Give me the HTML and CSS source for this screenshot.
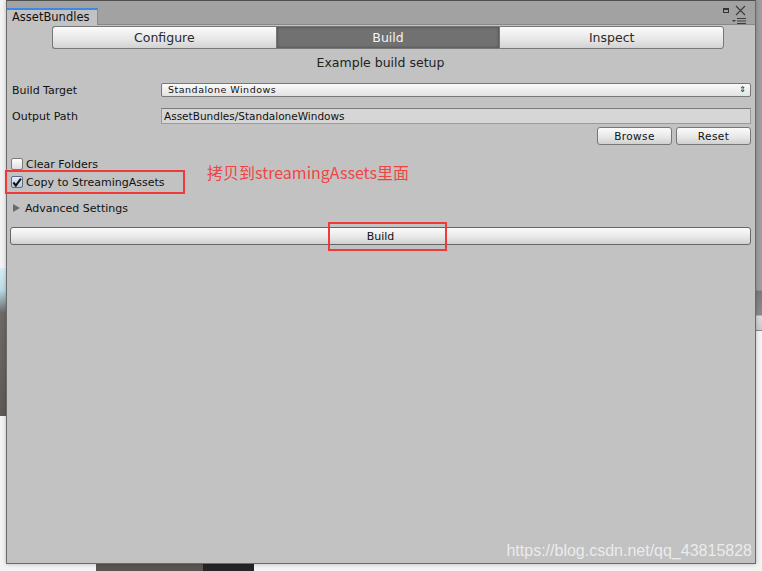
FILE: index.html
```html
<!DOCTYPE html>
<html lang="zh">
<head>
    <meta charset="UTF-8" />
    <meta name="viewport" content="width=device-width, initial-scale=1">
    <title>AssetBundles</title>
    <link rel="stylesheet" href="styles.css">
</head>
<body>
    <div class="desk">
        <div class="desk-sky"></div>
        <div class="desk-bottom"></div>
        <div class="desk-bottom dark"></div>
        <div class="desk-right"></div>

        <div class="window">
            <div class="titlebar">
                <div class="tab">AssetBundles</div>
                <div class="win-icons">
                    <div class="win-row">
                        <span class="max-box"></span>
                        <svg width="11" height="11" viewBox="0 0 11 11"><path d="M1 1 L10 10 M10 1 L1 10" stroke="#3a3a3a" stroke-width="1.1" fill="none"/></svg>
                    </div>
                    <svg width="14" height="6" viewBox="0 0 14 6"><path d="M0 2 L4 2 L2 4 Z" fill="#3a3a3a"/><path d="M5 0.5 H14 M5 3 H14 M5 5.5 H14" stroke="#3a3a3a" stroke-width="1"/></svg>
                </div>
            </div>

            <div class="content">
                <div class="toolbar">
                    <button class="tool-btn first">Configure</button>
                    <button class="tool-btn active">Build</button>
                    <button class="tool-btn last">Inspect</button>
                </div>

                <p class="heading">Example build setup</p>

                <div class="field-row target-row">
                    <span class="label">Build Target</span>
                    <div class="popup">
                        <span>Standalone Windows</span>
                        <span class="arrows">&#8661;</span>
                    </div>
                </div>

                <div class="field-row path-row">
                    <span class="label">Output Path</span>
                    <div class="textfield">AssetBundles/StandaloneWindows</div>
                </div>

                <div class="path-buttons">
                    <button class="small-btn">Browse</button>
                    <button class="small-btn">Reset</button>
                </div>

                <label class="check">
                    <span class="box"></span>
                    Clear Folders
                </label>
                <div class="copy-row">
                    <label class="check marked">
                        <span class="box">
                            <svg width="11" height="11" viewBox="0 0 11 11"><path d="M1.5 5.5 L4.2 8.8 L9.8 1.2" stroke="#111" stroke-width="2.2" fill="none"/></svg>
                        </span>
                        Copy to StreamingAssets
                    </label>
                    <span class="note">拷贝到streamingAssets里面</span>
                </div>

                <div class="foldout"><span class="tri"></span>Advanced Settings</div>

                <div class="build-row">
                    <button class="build-btn"><span class="mark">Build</span></button>
                </div>
            </div>
            <div class="watermark">https://blog.csdn.net/qq_43815828</div>
        </div>
    </div>
</body>
</html>
```

FILE: styles.css
```css
* { box-sizing: border-box; }
body {
    margin: 0;
    background: #f3f3f3;
    font-family: 'DejaVu Sans', Verdana, sans-serif;
    color: #111;
}
.desk {
    position: relative;
    width: 762px;
    height: 571px;
    overflow: hidden;
}
.desk-sky {
    position: absolute;
    left: 0;
    top: 268px;
    width: 8px;
    height: 148px;
    background: linear-gradient(#d8eef2 0px, #b9dbe6 22px, #6c6a67 45px, #5f5a56 100%);
}
.desk-bottom {
    position: absolute;
    left: 96px;
    top: 560px;
    width: 108px;
    height: 11px;
    background: #5a5550;
}
.desk-bottom.dark {
    left: 203px;
    width: 51px;
    background: #252525;
}
.desk-right {
    position: absolute;
    right: 0;
    top: 0;
    width: 8px;
    height: 331px;
    background: linear-gradient(#9e9e9e 0px, #9e9e9e 290px, #7b7b7b 291px, #8a8a8a 315px, #dcdcdc 316px, #c9c9c9 330px, #404040 331px);
}

.window {
    position: relative;
    margin-left: 6px;
    width: 750px;
    height: 564px;
    background: #c2c2c2;
    border: 1px solid #6a6a6a;
    border-top: 1px solid #4e4e4e;
    box-shadow: 0 0 4px rgba(0, 0, 0, 0.25);
    display: flex;
    flex-direction: column;
}
.titlebar {
    height: 24px;
    background: #a2a2a2;
    border-bottom: 1px solid #888;
    display: flex;
    justify-content: space-between;
    align-items: flex-end;
}
.tab {
    width: 91px;
    height: 17px;
    margin-bottom: -1px;
    background: #c2c2c2;
    border-top: 2px solid #3d87e6;
    border-right: 1px solid #8a8a8a;
    font-size: 11.5px;
    line-height: 15px;
    padding-left: 5px;
    color: #111;
}
.win-icons {
    align-self: flex-start;
    display: flex;
    flex-direction: column;
    align-items: flex-end;
    gap: 2px;
    padding: 4px 9px 0 0;
}
.win-row {
    display: flex;
    align-items: center;
    gap: 6px;
}
.max-box {
    width: 6px;
    height: 5px;
    border: 1px solid #333;
    border-top-width: 2px;
}

.content {
    flex: 1;
    padding: 1px 4px 0 3px;
    display: flex;
    flex-direction: column;
}
.toolbar {
    display: flex;
    margin: 0 0 0 42px;
    width: 672px;
    height: 23px;
}
.tool-btn {
    flex: 1;
    font-family: inherit;
    font-size: 12.5px;
    color: #2a2a2a;
    border: 1px solid #777;
    border-right: none;
    background: linear-gradient(#fbfbfb, #e6e6e6 60%, #d2d2d2);
    padding: 0;
}
.tool-btn.first { border-radius: 3px 0 0 3px; }
.tool-btn.last { border-radius: 0 3px 3px 0; border-right: 1px solid #777; }
.tool-btn.active {
    background: #717171;
    color: #f4f4f4;
    box-shadow: inset 0 0 3px #444;
}
.heading {
    margin: 6px 0 0;
    text-align: center;
    font-size: 12.5px;
    line-height: 15px;
    color: #222;
}

.field-row {
    display: flex;
    align-items: center;
}
.label {
    width: 151px;
    padding-left: 2px;
    font-size: 11px;
}
.target-row { margin-top: 13px; height: 14px; }
.popup {
    flex: 1;
    height: 14px;
    border: 1px solid #777;
    border-radius: 2px;
    background: linear-gradient(#fbfbfb, #e2e2e2);
    font-size: 9.5px;
    letter-spacing: 0.5px;
    line-height: 12px;
    padding-left: 6px;
    display: flex;
    justify-content: space-between;
}
.arrows {
    font-size: 8px;
    padding-right: 4px;
    letter-spacing: 0;
}
.path-row { margin-top: 11px; height: 16px; }
.textfield {
    flex: 1;
    height: 16px;
    background: #d6d6d6;
    border: 1px solid #9a9a9a;
    border-top-color: #7a7a7a;
    font-size: 10.5px;
    line-height: 14px;
    padding-left: 2px;
}
.path-buttons {
    display: flex;
    justify-content: flex-end;
    gap: 4px;
    margin-top: 3px;
}
.small-btn {
    width: 75px;
    height: 18px;
    font-family: inherit;
    font-size: 10.5px;
    letter-spacing: 0.4px;
    color: #111;
    border: 1px solid #777;
    border-radius: 3px;
    background: linear-gradient(#fbfbfb, #e6e6e6 60%, #cfcfcf);
    padding: 0;
}

.check {
    display: flex;
    align-items: center;
    gap: 3px;
    font-size: 11px;
    height: 16px;
    padding-left: 1px;
}
.path-buttons + .check { margin-top: 11px; }
.box {
    width: 12px;
    height: 12px;
    border: 1px solid #7a7a7a;
    border-radius: 2px;
    background: linear-gradient(#fdfdfd, #dedede);
    display: flex;
    align-items: center;
    justify-content: center;
}
.check.marked .box {
    background: linear-gradient(#e9eef8, #b9c6e0);
    border-color: #5a6a8a;
}
.copy-row {
    display: flex;
    align-items: center;
    height: 18px;
    margin-top: 1px;
}
.copy-row .check {
    outline: 2px solid #f03a3a;
    width: 176px;
    height: 20px;
    margin-left: -3px;
    padding-left: 4px;
}
.note {
    margin-left: 24px;
    margin-top: -21px;
    color: #f04545;
    font-family: 'Noto Sans CJK SC', 'Liberation Sans', sans-serif;
    font-size: 16px;
}
.foldout {
    display: flex;
    align-items: center;
    gap: 5px;
    margin-top: 9px;
    height: 16px;
    font-size: 11px;
    padding-left: 3px;
}
.tri {
    width: 0;
    height: 0;
    border-left: 7px solid #6a6a6a;
    border-top: 4.5px solid transparent;
    border-bottom: 4.5px solid transparent;
}
.build-row {
    margin-top: 11px;
}
.build-btn {
    width: 741px;
    height: 18px;
    font-family: inherit;
    font-size: 11px;
    color: #111;
    border: 1px solid #666;
    border-radius: 3px;
    background: linear-gradient(#fbfbfb, #e6e6e6 60%, #cfcfcf);
    padding: 0;
    display: flex;
    justify-content: center;
    align-items: center;
}
.mark {
    position: relative;
}
.mark::after {
    content: '';
    position: absolute;
    left: -39px;
    top: -8px;
    width: 115px;
    height: 25px;
    border: 2px solid #f03a3a;
}
.watermark {
    position: absolute;
    right: 3px;
    bottom: 3px;
    font-family: 'Liberation Sans', Arial, sans-serif;
    font-size: 16px;
    color: rgba(255, 255, 255, 0.7);
}
```
